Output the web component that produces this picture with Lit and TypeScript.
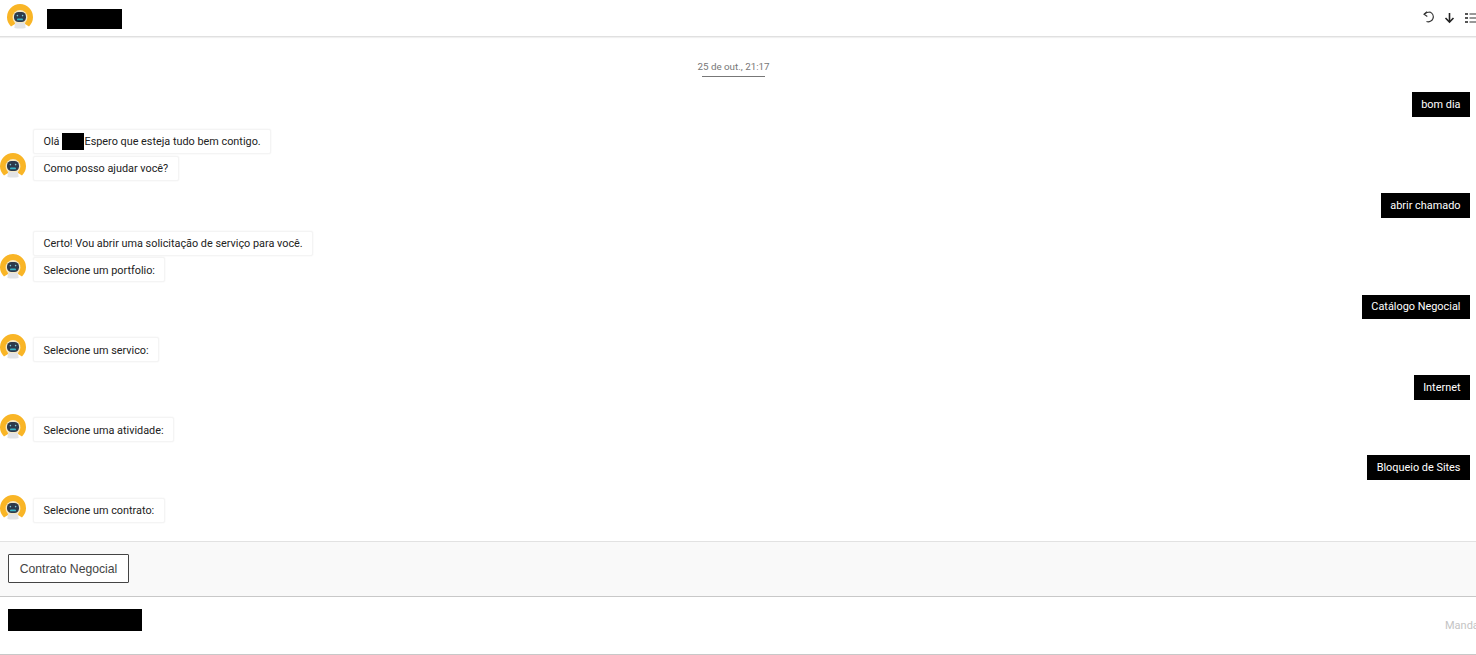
import { LitElement, html, css, svg } from "lit";
import { customElement } from "lit/decorators.js";

const avatar = (size: number) => html`<svg class="avatar" width=${size} height=${size} viewBox="0 0 26 26" aria-hidden="true">
  ${svg`<path d="M4 22.5 A13 13 0 1 1 22 22.5 L18 20 L8 20 Z" fill="#f9b526"/>
  <circle cx="13" cy="13.5" r="7.4" fill="#f4e7c4"/>
  <path d="M8 19 H18 L18.6 24 Q13 25 7.4 24 Z" fill="#e2e3e5"/>
  <rect x="7" y="8" width="12" height="10" rx="4.5" fill="#2d3a4c"/>
  <rect x="10" y="14.5" width="6" height="1.8" rx=".9" fill="#38b5c6"/>
  <circle cx="10.4" cy="11.6" r=".8" fill="#7fcad6"/><circle cx="15.6" cy="11.6" r=".8" fill="#7fcad6"/>`}
</svg>`;

@customElement("app-root")
export class AppRoot extends LitElement {
  static styles = css`
    :host { display: flex; flex-direction: column; width: 1476px; height: 655px; overflow: hidden; background: #fff; font-family: Roboto, "Liberation Sans", sans-serif; color: #222; }
    * { box-sizing: border-box; }
    header { height: 37px; flex: none; display: flex; align-items: flex-start; border-bottom: 1px solid #e0e0e0; box-shadow: 0 1px 1px #f0f0f0; padding: 4px 0 0 7px; }
    .head-avatar { display: flex; }
    .mask { background: #000; display: inline-block; }
    .name { width: 75px; height: 20px; margin: 5px 0 0 14px; }
    .tools { margin-left: auto; display: flex; align-items: center; gap: 10px; padding-top: 7px; }
    .tools svg { display: block; }
    .tools .undo { margin-right: -2px; }
    main { height: 504px; flex: none; overflow: hidden; }
    .date { width: 63px; margin: 23px 0 0 702px; padding-bottom: 3px; font-size: 9.8px; line-height: 13px; color: #777; border-bottom: 1px solid #777; white-space: nowrap; display: flex; justify-content: center; }
    .user { display: flex; justify-content: flex-end; padding-right: 6px; }
    .user span { background: #000; color: #fff; font-size: 10.9px; line-height: 14px; padding: 5.5px 9.5px; height: 24.5px; }
    .bot { display: flex; align-items: flex-end; gap: 7px; }
    .avatar { flex: none; }
    .bot .avatar { margin-bottom: 2px; }
    .stack { display: flex; flex-direction: column; align-items: flex-start; gap: 1.5px; }
    .bubble { background: #fff; border: 1px solid #f4f4f4; box-shadow: 0 0 2px #f0f0f0; border-radius: 2px; font-size: 10.85px; line-height: 14px; height: 25px; padding: 6px 9.5px 4px; color: #222; display: flex; align-items: center; white-space: nowrap; }
    .bubble.first { padding: 5px 9.5px; }
    .inline-mask { width: 22px; height: 17px; margin: 0 1px 0 2px; }
    .u1 { margin-top: 15px; }
    .b1 { margin-top: 12.5px; }
    .u2 { margin-top: 12.5px; }
    .b2 { margin-top: 13px; }
    .u3 { margin-top: 12.5px; }
    .b3 { margin-top: 15px; }
    .u4 { margin-top: 13px; }
    .b4 { margin-top: 14.5px; }
    .u5 { margin-top: 13px; }
    .b5 { margin-top: 15px; }
    .choices { height: 56px; flex: none; background: #f9f9f9; border-top: 1px solid #e2e2e2; border-bottom: 1px solid #c8c8c8; padding: 12px 8px; }
    .choice { width: 121px; height: 29px; background: #fff; border: 1px solid #444; border-radius: 1px; font-family: "Liberation Sans", sans-serif; font-size: 12.2px; color: #444; padding: 0; }
    footer { height: 58px; flex: none; display: flex; justify-content: space-between; border-bottom: 1px solid #c8c8c8; padding: 12px 0 0 8px; overflow: hidden; }
    .composer { width: 134px; height: 22px; }
    .send { font-size: 11px; color: #c4c4c4; width: 31px; overflow: hidden; white-space: nowrap; margin-top: 10px; }
  `;

  render() {
    return html`
      <header>
        <div class="head-avatar">${avatar(26)}</div>
        <span class="mask name"></span>
        <div class="tools">
          <svg class="undo" width="13" height="13" viewBox="0 0 13 13" fill="none" stroke="#333" stroke-width="1.1"><path d="M1.5 3.2 C3 1.5 5 1 7 1 A5 5 0 1 1 3.5 10.5"/><path d="M4 .8 L1 3.2 L4.3 5.5"/></svg>
          <svg width="11" height="13" viewBox="0 0 11 13" fill="none" stroke="#222" stroke-width="1.6"><path d="M5.5 2 V11"/><path d="M1.5 7 L5.5 11 L9.5 7"/></svg>
          <svg width="11" height="12" viewBox="0 0 11 12" fill="#555"><rect x="0" y="1" width="3" height="2"/><rect x="0" y="5" width="3" height="2"/><rect x="0" y="9" width="3" height="2"/><rect x="4.5" y="1.4" width="6.5" height="1.2"/><rect x="4.5" y="5.4" width="6.5" height="1.2"/><rect x="4.5" y="9.4" width="6.5" height="1.2"/></svg>
        </div>
      </header>
      <main>
        <div class="date">25 de out., 21:17</div>
        <div class="user u1"><span>bom dia</span></div>
        <div class="bot b1">${avatar(26)}<div class="stack">
          <div class="bubble first">Olá<span class="mask inline-mask"></span>Espero que esteja tudo bem contigo.</div>
          <div class="bubble">Como posso ajudar você?</div></div></div>
        <div class="user u2"><span>abrir chamado</span></div>
        <div class="bot b2">${avatar(26)}<div class="stack">
          <div class="bubble">Certo! Vou abrir uma solicitação de serviço para você.</div>
          <div class="bubble">Selecione um portfolio:</div></div></div>
        <div class="user u3"><span>Catálogo Negocial</span></div>
        <div class="bot b3">${avatar(26)}<div class="stack"><div class="bubble">Selecione um servico:</div></div></div>
        <div class="user u4"><span>Internet</span></div>
        <div class="bot b4">${avatar(26)}<div class="stack"><div class="bubble">Selecione uma atividade:</div></div></div>
        <div class="user u5"><span>Bloqueio de Sites</span></div>
        <div class="bot b5">${avatar(26)}<div class="stack"><div class="bubble">Selecione um contrato:</div></div></div>
      </main>
      <div class="choices"><button class="choice">Contrato Negocial</button></div>
      <footer>
        <span class="mask composer"></span>
        <span class="send">Mandar</span>
      </footer>
    `;
  }
}
